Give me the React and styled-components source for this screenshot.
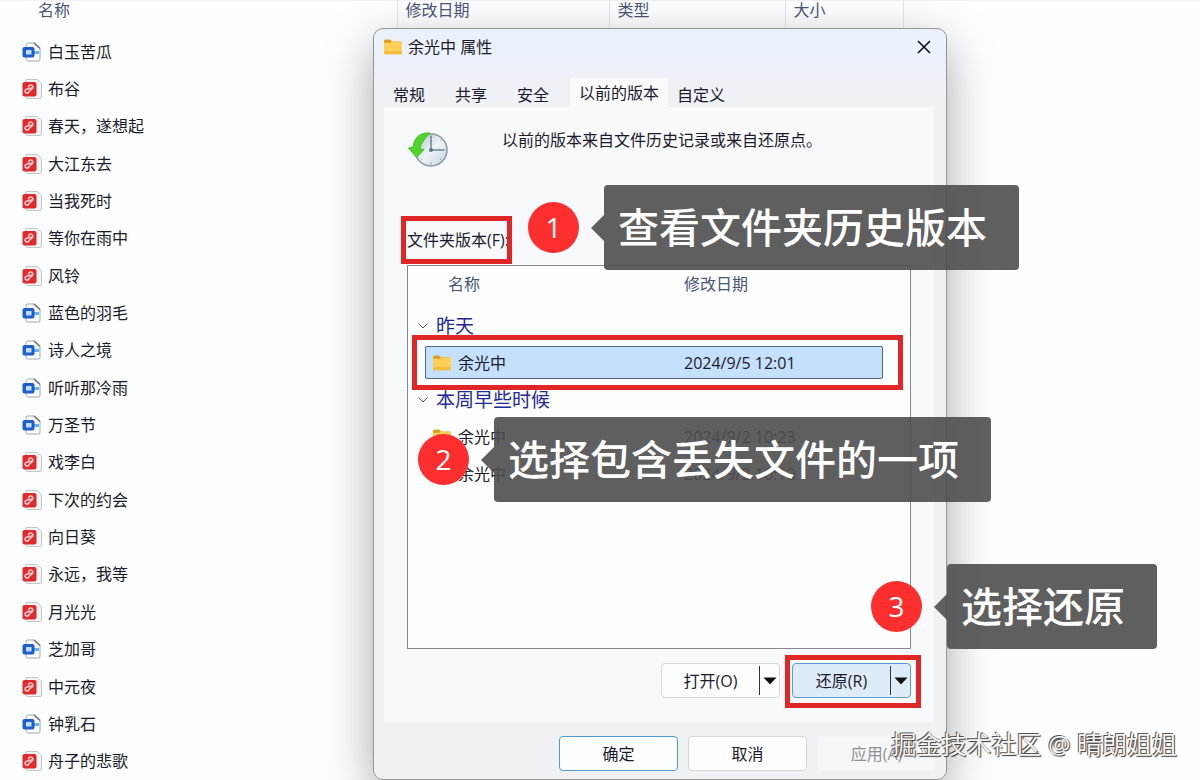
import React from "react";
import styled, { createGlobalStyle, css } from "styled-components";

const files = [
  { name: "白玉苦瓜", type: "word" },
  { name: "布谷", type: "pdf" },
  { name: "春天，遂想起", type: "pdf" },
  { name: "大江东去", type: "pdf" },
  { name: "当我死时", type: "pdf" },
  { name: "等你在雨中", type: "pdf" },
  { name: "风铃", type: "pdf" },
  { name: "蓝色的羽毛", type: "word" },
  { name: "诗人之境", type: "word" },
  { name: "听听那冷雨", type: "word" },
  { name: "万圣节", type: "word" },
  { name: "戏李白", type: "pdf" },
  { name: "下次的约会", type: "pdf" },
  { name: "向日葵", type: "pdf" },
  { name: "永远，我等", type: "pdf" },
  { name: "月光光", type: "pdf" },
  { name: "芝加哥", type: "word" },
  { name: "中元夜", type: "pdf" },
  { name: "钟乳石", type: "word" },
  { name: "舟子的悲歌", type: "pdf" },
];

const tabs = ["常规", "共享", "安全", "以前的版本", "自定义"];

const groups = [
  {
    title: "昨天",
    rows: [{ name: "余光中", date: "2024/9/5 12:01", selected: true }],
  },
  {
    title: "本周早些时候",
    rows: [
      { name: "余光中", date: "2024/9/2 10:23" },
      { name: "余光中", date: "2024/9/2 10:10" },
    ],
  },
];

function WordIcon() {
  return (
    <svg width="20" height="20" viewBox="0 0 20 20" aria-hidden="true">
      <path
        d="M5.5 1h7L18 6v11.5a1.500 1.500 0 0 1-1.500 1.500h-11A1.500 1.500 0 0 1 4 17.500v-15A1.500 1.500 0 0 1 5.500 1z"
        fill="#fbfcfd"
        stroke="#a3a7ad"
      />
      <path d="M12 1l6 5.500" stroke="#6f747b" strokeWidth="1.600" />
      <path d="M12 9h5v3h-5z" fill="#63b4f2" />
      <rect x="0.500" y="5" width="12" height="10.500" rx="2" fill="#1d5fcb" />
      <rect x="4" y="8" width="5.500" height="4.500" rx="0.500" fill="#c5dcf8" />
    </svg>
  );
}

function PdfIcon() {
  return (
    <svg width="20" height="20" viewBox="0 0 20 20" aria-hidden="true">
      <path
        d="M4 0.500h11L19.500 4.500V18a1.500 1.500 0 0 1-1.500 1.500H5.500A1.500 1.500 0 0 1 4 18z"
        fill="#f5f5f6"
        stroke="#c3c4c8"
      />
      <rect x="0.500" y="3" width="14" height="14.500" rx="2" fill="#df2a2d" />
      <path
        d="M7 12.500a2 2 0 1 1-2.500-2.300L10 9M6.500 8a2.200 2.200 0 1 1 3.500 2l-3 2.500"
        fill="none"
        stroke="#fbc9c8"
        strokeWidth="1.600"
        strokeLinecap="round"
      />
    </svg>
  );
}

function FolderIcon() {
  return (
    <svg width="20" height="20" viewBox="0 0 20 20" aria-hidden="true">
      <path d="M1 4a1.500 1.500 0 0 1 1.500-1.500h4.800L9 4.500h8.500A1.500 1.500 0 0 1 19 6v4H1z" fill="#dd9d1d" />
      <path
        d="M1 5.800h6.500L9 4.500h8.500A1.500 1.500 0 0 1 19 6v9.800a1.500 1.500 0 0 1-1.500 1.500h-15A1.500 1.500 0 0 1 1 15.800z"
        fill="#fbd055"
      />
      <path d="M1 14h18v1.800a1.500 1.500 0 0 1-1.500 1.500h-15A1.500 1.500 0 0 1 1 15.800z" fill="#f4bd3d" />
    </svg>
  );
}

function HistoryIcon() {
  return (
    <svg width="42" height="38" viewBox="0 0 42 38" aria-hidden="true">
      <defs>
        <linearGradient id="face" x1="0" y1="0" x2="1" y2="1">
          <stop offset="0" stopColor="#a9bdc8" />
          <stop offset="0.500" stopColor="#eef4f7" />
          <stop offset="1" stopColor="#c5d3dc" />
        </linearGradient>
      </defs>
      <circle cx="24" cy="19" r="16" fill="url(#face)" stroke="#8c969e" strokeWidth="1.500" />
      <path d="M24 4v3M24 31v3M37 19h2M14 29l1.500-1.500M33 28l1.500 1.500M33 10l1.500-1.500" stroke="#9aa9b4" />
      <path d="M24 5v14h13" fill="none" stroke="#6f8494" strokeWidth="1.500" />
      <circle cx="24" cy="19" r="2" fill="#4d7b92" />
      <path
        d="M23 2C13 1 7 7 6 16.500L1.500 17l8 9.500L17 18.500l-4-.5c1-6 5-11 10-16z"
        fill="#4fd62d"
        stroke="#3fba28"
      />
    </svg>
  );
}

function Annotation({ number, text, left, top }) {
  return (
    <Note $left={left} $top={top}>
      <Badge>{number}</Badge>
      <Callout>{text}</Callout>
    </Note>
  );
}

function SplitButton({ children, label, primary }) {
  return (
    <Split $primary={primary}>
      <button type="button">{children}</button>
      <button type="button" aria-label={label}>
        <svg width="14" height="8" viewBox="0 0 14 8" aria-hidden="true">
          <path d="M0.500 0.500h13L7 7.500z" fill="#111" />
        </svg>
      </button>
    </Split>
  );
}

function Properties() {
  return (
    <Dialog role="dialog" aria-labelledby="title">
      <TitleBar>
        <FolderIcon />
        <h1 id="title">余光中 属性</h1>
        <button type="button" aria-label="关闭">
          <svg width="14" height="14" viewBox="0 0 14 14" aria-hidden="true">
            <path d="M1 1l12 12M13 1L1 13" stroke="#111" strokeWidth="1.600" />
          </svg>
        </button>
      </TitleBar>
      <Tabs role="tablist">
        {tabs.map((tab, i) => (
          <Tab key={tab} type="button" role="tab" aria-selected={i === 3} $active={i === 3}>
            {tab}
          </Tab>
        ))}
      </Tabs>
      <Panel role="tabpanel">
        <Intro>
          <HistoryIcon />
          <p>以前的版本来自文件历史记录或来自还原点。</p>
        </Intro>
        <ListLabel id="versions">文件夹版本(F):</ListLabel>
        <Versions aria-labelledby="versions">
          <thead>
            <VersionHead>
              <th>名称</th>
              <th>修改日期</th>
            </VersionHead>
          </thead>
          {groups.map((group) => (
            <tbody key={group.title}>
              <GroupRow>
                <th colSpan="2">
                  <svg width="10" height="6" viewBox="0 0 10 6" aria-hidden="true">
                    <path d="M0.500 0.500L5 5l4.500-4.500" fill="none" stroke="#555" />
                  </svg>
                  {group.title}
                </th>
              </GroupRow>
              {group.rows.map((row) => (
                <VersionRow key={row.date} $selected={row.selected}>
                  <td>
                    <FolderIcon />
                    {row.name}
                  </td>
                  <td>{row.date}</td>
                </VersionRow>
              ))}
            </tbody>
          ))}
        </Versions>
        <Actions>
          <SplitButton label="打开选项">打开(O)</SplitButton>
          <SplitButton label="还原选项" primary>
            还原(R)
          </SplitButton>
        </Actions>
      </Panel>
      <Footer>
        <Button type="button" $primary>
          确定
        </Button>
        <Button type="button">取消</Button>
        <Button type="button" disabled>
          应用(A)
        </Button>
      </Footer>
    </Dialog>
  );
}

function App() {
  return (
    <Desktop>
      <GlobalStyle />
      <FileTable>
        <colgroup>
          <col width="397" />
          <col width="212" />
          <col width="176" />
          <col width="118" />
          <col />
        </colgroup>
        <thead>
          <tr>
            <th>名称</th>
            <th>修改日期</th>
            <th>类型</th>
            <th>大小</th>
            <th aria-hidden="true"></th>
          </tr>
        </thead>
        <tbody>
          {files.map((file) => (
            <tr key={file.name}>
              <td colSpan="5">
                <FileName>
                  {file.type === "word" ? <WordIcon /> : <PdfIcon />}
                  {file.name}
                </FileName>
              </td>
            </tr>
          ))}
        </tbody>
      </FileTable>
      <Properties />
      <Annotation number="1" text="查看文件夹历史版本" left={528} top={185} />
      <Annotation number="2" text="选择包含丢失文件的一项" left={418} top={417} />
      <Annotation number="3" text="选择还原" left={871} top={564} />
      <Watermark>掘金技术社区 @ 晴朗姐姐</Watermark>
    </Desktop>
  );
}

export default App;

const GlobalStyle = createGlobalStyle`
  * {
    box-sizing: border-box;
  }
  body {
    margin: 0;
    font-family: "Open Sans", "Noto Sans CJK SC", sans-serif;
    font-size: 16px;
    line-height: 24px;
    color: #1b1a2b;
    background: #fdfeff;
  }
  button {
    padding: 0;
    border: none;
    background: none;
    font: inherit;
    color: inherit;
  }
  h1, p {
    margin: 0;
    font-size: 16px;
    font-weight: 400;
  }
  th {
    font-weight: 400;
    text-align: left;
  }
  svg {
    flex: none;
    display: block;
  }
`;

const highlight = css`
  position: relative;

  &::after {
    content: "";
    position: absolute;
    border: 5px solid #e02626;
    pointer-events: none;
  }
`;

const Desktop = styled.main`
  position: relative;
  min-height: 100vh;
  overflow: hidden;
`;

const FileTable = styled.table`
  width: 100%;
  height: 100vh;
  table-layout: fixed;
  border-collapse: collapse;
  border-top: 1px solid #f0f1f3;

  th {
    height: 32px;
    padding: 0 0 14px 8px;
    line-height: 18px;
    color: #4a5578;
    border-left: 1px solid #e2e5ea;
  }
  th:first-child {
    padding-left: 38px;
    border-left: none;
  }
  td {
    padding: 0 0 0 22px;
  }
`;

const FileName = styled.div`
  display: flex;
  align-items: center;
  gap: 6px;
`;

const Dialog = styled.section`
  position: absolute;
  top: 28px;
  left: 373px;
  width: 574px;
  border: 1px solid #929598;
  border-radius: 10px;
  background: linear-gradient(#eaf1fb, #eff1f4 80px, #eff1f3);
  box-shadow: 0 16px 48px rgba(0, 0, 0, 0.34);
`;

const TitleBar = styled.header`
  display: flex;
  align-items: center;
  gap: 5px;
  height: 36px;
  padding: 0 15px 0 9px;

  h1 {
    flex: 1;
  }
`;

const Tabs = styled.div`
  display: flex;
  align-items: flex-end;
  height: 42px;
  padding-left: 10px;
`;

const Tab = styled.button`
  height: 25px;
  margin-right: 12px;
  padding: 0 9px;

  ${({ $active }) =>
    $active &&
    css`
      height: 29px;
      margin-right: 0;
      background: #f9fafc;
    `}
`;

const Panel = styled.div`
  margin: 0 12px 0 10px;
  padding: 24px 23px;
  background: #f8f9fc;
`;

const Intro = styled.div`
  display: grid;
  grid-template-columns: 95px 1fr;
  align-items: start;
  height: 97px;

  p {
    line-height: 18px;
  }
`;

const ListLabel = styled.p`
  ${highlight}
  z-index: 1;
  width: fit-content;
  margin-bottom: 13px;

  &::after {
    inset: -12px -3px -12px -6px;
  }
`;

const Versions = styled.table`
  display: block;
  height: 384px;
  border: 1px solid #85888c;
  background: #fdfefe;

  thead {
    display: block;
  }
  tbody {
    display: flex;
    flex-direction: column;
  }
`;

const VersionHead = styled.tr`
  display: grid;
  grid-template-columns: 236px 1fr;
  height: 41px;
  margin-right: 22px;
  padding: 6px 0 0 40px;

  th {
    padding: 0;
    color: #4a5578;
  }
`;

const GroupRow = styled.tr`
  display: block;

  th {
    display: flex;
    align-items: center;
    gap: 8px;
    height: 37px;
    padding: 0 0 0 10px;
    font-size: 19px;
    color: #1f2a94;
  }
`;

const VersionRow = styled.tr`
  display: grid;
  grid-template-columns: 252px 1fr;
  align-items: center;
  height: 33px;
  margin: 2px 27px 2px 17px;
  padding-left: 6px;
  border: 1px solid transparent;
  border-radius: 2px;

  td {
    display: flex;
    align-items: center;
    gap: 6px;
    padding: 0;
  }

  ${({ $selected }) =>
    $selected &&
    css`
      ${highlight}
      border-color: #4d6880;
      background: #c4e0fb;

      &::after {
        inset: -12px -21px -12px -14px;
      }
    `}
`;

const Actions = styled.div`
  display: flex;
  justify-content: flex-end;
  gap: 12px;
  margin-top: 14px;
`;

const Split = styled.div`
  display: grid;
  grid-template-columns: 1fr 20px;
  width: 119px;
  height: 35px;
  border: 1px solid #d4d6da;
  border-radius: 4px;
  background: #fdfdfe;

  button + button {
    display: grid;
    place-items: center;
    margin: 2px 0;
    border-left: 1px solid #333;
  }

  ${({ $primary }) =>
    $primary &&
    css`
      ${highlight}
      border-color: #5a9bd5;
      background: #deecfa;

      &::after {
        inset: -9px -11px -11px -8px;
      }
    `}
`;

const Footer = styled.footer`
  display: flex;
  justify-content: flex-end;
  gap: 10px;
  padding: 14px 10px 8px;
`;

const Button = styled.button`
  width: 119px;
  height: 35px;
  border: 1px solid ${({ $primary }) => ($primary ? "#4b9ad0" : "#d4d6da")};
  border-radius: 4px;
  background: #fdfeff;

  &:disabled {
    border-color: #f4f5f7;
    background: #f6f7f9;
    color: #8f9096;
  }
`;

const Note = styled.div`
  position: absolute;
  top: ${({ $top }) => $top}px;
  left: ${({ $left }) => $left}px;
  z-index: 2;
  display: flex;
  align-items: center;
  gap: 25px;
`;

const Badge = styled.span`
  width: 51px;
  height: 51px;
  border-radius: 50%;
  background: #fd2e2e;
  color: #fff;
  font-size: 28px;
  line-height: 50px;
  text-align: center;
`;

const Callout = styled.span`
  position: relative;
  padding: 0 32px 0 14px;
  border-radius: 4px;
  background: rgba(78, 78, 79, 0.9);
  color: #fff;
  font-size: 41px;
  font-weight: 500;
  line-height: 85px;
  white-space: nowrap;

  &::before {
    content: "";
    position: absolute;
    top: 30px;
    right: 100%;
    border: 13px solid transparent;
    border-left: none;
    border-right-color: rgba(78, 78, 79, 0.9);
  }
`;

const Watermark = styled.p`
  position: absolute;
  right: 23px;
  bottom: 20px;
  z-index: 3;
  && {
    font-size: 25px;
    line-height: 32px;
  }
  color: #f4f4f4;
  text-shadow: -1px -1px 0 #555, 1px 1px 1px #333;
`;
